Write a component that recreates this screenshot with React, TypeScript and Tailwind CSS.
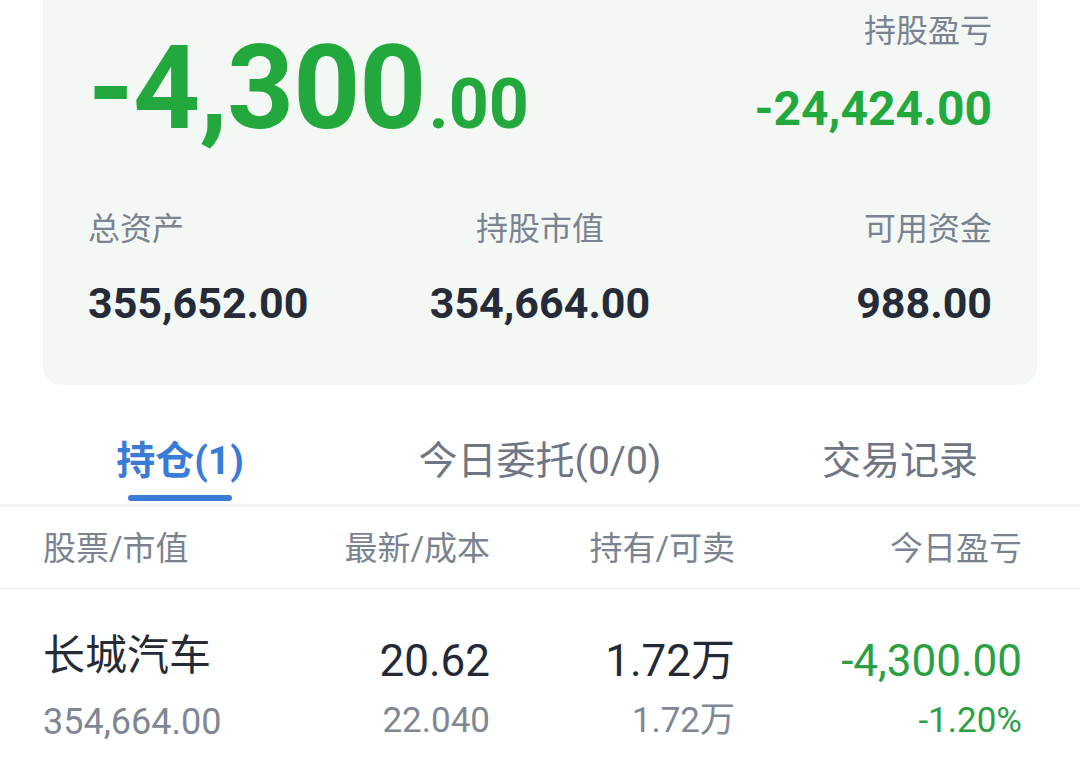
import React from 'react';

const font = "font-['Roboto','Noto_Sans_CJK_SC',sans-serif]";

const App: React.FC = () => {
  return (
    <div className={`w-[1080px] h-[775px] overflow-hidden bg-white ${font}`}>
      {/* account summary card */}
      <div className="mx-[43px] rounded-b-[18px] bg-[#f3f8f5] px-[45px] pt-[15px] pb-[60px]">
        <div className="flex justify-between items-start">
          <div className="mt-[15px] flex items-baseline font-bold text-[#22a83c] leading-none">
            <span className="text-[117px] tracking-[-1px]">-4,300</span>
            <span className="text-[70px] ml-[3px]">.00</span>
          </div>
          <div className="flex flex-col items-end">
            <span className="text-[32px] leading-none text-[#7b8390]">持股盈亏</span>
            <span className="mt-[38px] text-[48px] leading-none font-bold text-[#22a83c]">-24,424.00</span>
          </div>
        </div>
        <div className="mt-[66px] grid grid-cols-3">
          <div className="flex flex-col items-start">
            <span className="text-[32px] leading-none text-[#7b8390]">总资产</span>
            <span className="mt-[37px] text-[43px] leading-none font-bold text-[#262b38]">355,652.00</span>
          </div>
          <div className="flex flex-col items-center">
            <span className="text-[32px] leading-none text-[#7b8390]">持股市值</span>
            <span className="mt-[37px] text-[43px] leading-none font-bold text-[#262b38]">354,664.00</span>
          </div>
          <div className="flex flex-col items-end">
            <span className="text-[32px] leading-none text-[#7b8390]">可用资金</span>
            <span className="mt-[37px] text-[43px] leading-none font-bold text-[#262b38]">988.00</span>
          </div>
        </div>
      </div>

      {/* tabs */}
      <div className="mt-[57px] grid grid-cols-3">
        <div className="flex flex-col items-center">
          <span className="text-[39px] leading-none font-bold text-[#3b7bd8]">持仓(1)</span>
          <span className="mt-[14px] h-[6px] w-[104px] rounded-full bg-[#3b7bd8]" />
        </div>
        <div className="flex flex-col items-center">
          <span className="text-[39px] leading-none text-[#6f7683]">今日委托(0/0)</span>
        </div>
        <div className="flex flex-col items-center">
          <span className="text-[39px] leading-none text-[#6f7683]">交易记录</span>
        </div>
      </div>
      <div className="mt-[3px] h-[3px] bg-[#f2f4f6]" />

      {/* table header */}
      <div className="grid grid-cols-[220px_227px_245px_287px] pl-[43px] pr-[58px] pt-[25px] pb-[23px] border-b border-[#ebedf0] text-[33px] leading-none text-[#7b8390]">
        <span>股票/市值</span>
        <span className="text-right">最新/成本</span>
        <span className="text-right">持有/可卖</span>
        <span className="text-right">今日盈亏</span>
      </div>

      {/* position row */}
      <div className="grid grid-cols-[220px_227px_245px_287px] pl-[43px] pr-[58px]">
        <div className="flex flex-col items-start pt-[46px]">
          <span className="text-[42px] leading-none text-[#262b36]">长城汽车</span>
          <span className="mt-[27px] text-[36px] leading-none text-[#7f8794]">354,664.00</span>
        </div>
        <div className="flex flex-col items-end pt-[50px]">
          <span className="text-[44px] leading-none text-[#232936]">20.62</span>
          <span className="mt-[20px] text-[35px] leading-none text-[#7f8794]">22.040</span>
        </div>
        <div className="flex flex-col items-end pt-[50px]">
          <span className="text-[44px] leading-none text-[#232936]">1.72万</span>
          <span className="mt-[20px] text-[35px] leading-none text-[#7f8794]">1.72万</span>
        </div>
        <div className="flex flex-col items-end pt-[50px]">
          <span className="text-[44px] leading-none text-[#2aa043]">-4,300.00</span>
          <span className="mt-[20px] text-[35px] leading-none text-[#2aa043]">-1.20%</span>
        </div>
      </div>
    </div>
  );
};

export default App;
